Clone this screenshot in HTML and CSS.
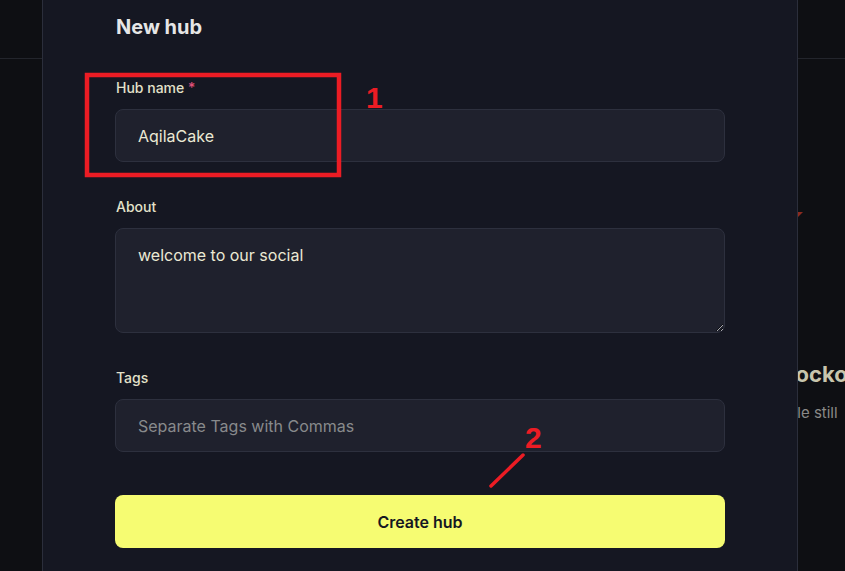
FILE: index.html
```html
<!DOCTYPE html>
<html lang="en">
<head>
    <meta charset="UTF-8">
    <meta name="viewport" content="width=device-width, initial-scale=1.0">
    <title>New hub</title>
    <link rel="stylesheet" href="styles.css">
</head>
<body>
    <header class="topbar"></header>
    <main class="page">
        <div class="page-side">
            <span class="marker"></span>
            <h2 class="side-title">Lockout</h2>
            <p class="side-text">While still</p>
        </div>
    </main>

    <div class="modal">
        <h1>New hub</h1>
        <form class="hub-form">
            <div class="field">
                <label for="hub-name">Hub name <span class="req">*</span></label>
                <input id="hub-name" type="text" value="AqilaCake">
            </div>
            <div class="field">
                <label for="hub-about">About</label>
                <textarea id="hub-about">welcome to our social</textarea>
            </div>
            <div class="field field-last">
                <label for="hub-tags">Tags</label>
                <input id="hub-tags" type="text" placeholder="Separate Tags with Commas">
            </div>
            <button type="button" class="create-btn">Create hub</button>
        </form>
    </div>

    <svg class="marks" width="845" height="571" viewBox="0 0 845 571">
        <rect x="87" y="75" width="252" height="100" fill="none" stroke="#ec1c24" stroke-width="4.5"/>
        <text x="366" y="108" class="mark-num">1</text>
        <text x="525" y="448" class="mark-num">2</text>
        <line x1="491" y1="486" x2="523" y2="455" stroke="#ec1c24" stroke-width="3.5" stroke-linecap="round"/>
    </svg>
</body>
</html>
```

FILE: styles.css
```css
* {
    box-sizing: border-box;
}

body {
    margin: 0;
    height: 100vh;
    overflow: hidden;
    background: #0e0f13;
    font-family: 'Inter', 'Liberation Sans', sans-serif;
    color: #e8e8e8;
}

.topbar {
    height: 59px;
    border-bottom: 1px solid #23252c;
}

.page {
    display: flex;
    justify-content: flex-end;
}

.page-side {
    width: 75px;
    padding-top: 153px;
    white-space: nowrap;
}

.marker {
    display: block;
    width: 0;
    height: 0;
    margin-left: 21px;
    border-left: 6px solid transparent;
    border-right: 6px solid transparent;
    border-top: 6px solid #8c2a1f;
}

.side-title {
    margin: 141px 0 0 13px;
    font-size: 22px;
    line-height: 30px;
    font-weight: 700;
    color: #c8c5ad;
}

.side-text {
    margin: 14px 0 0 0;
    font-size: 15px;
    color: #8a8a88;
}

.modal {
    position: absolute;
    top: 0;
    left: 42px;
    width: 756px;
    height: 600px;
    padding: 13px 72px 0 72px;
    background: #151722;
    border: 1px solid #2b2e3b;
    border-top: none;
}

.modal h1 {
    margin: 0 0 37px 1px;
    font-size: 20px;
    line-height: 28px;
    font-weight: 700;
    color: #e6e6e6;
}

.field {
    display: flex;
    flex-direction: column;
    margin-bottom: 35px;
}

.field-last {
    margin-bottom: 43px;
}

.field label {
    margin-bottom: 11px;
    padding-left: 1px;
    font-size: 14px;
    line-height: 20px;
    font-weight: 500;
    color: #e3e1ca;
}

.req {
    color: #e0507a;
}

.field input,
.field textarea {
    width: 100%;
    padding: 0 22px;
    font-family: inherit;
    font-size: 16px;
    line-height: 24px;
    color: #ebe9d4;
    background: #1f212d;
    border: 1px solid #2d303e;
    border-radius: 8px;
    outline: none;
}

.field input {
    height: 53px;
}

.field textarea {
    height: 105px;
    padding-top: 14px;
    resize: vertical;
}

.field input::placeholder {
    color: #888a8c;
}

.create-btn {
    display: block;
    width: 100%;
    height: 53px;
    font-family: inherit;
    font-size: 16px;
    font-weight: 600;
    color: #151722;
    background: #f6fc72;
    border: none;
    border-radius: 8px;
    cursor: pointer;
}

.marks {
    position: absolute;
    top: 0;
    left: 0;
    pointer-events: none;
}

.mark-num {
    font-family: 'Liberation Sans', sans-serif;
    font-size: 30px;
    font-weight: 700;
    fill: #ec1c24;
}
```
